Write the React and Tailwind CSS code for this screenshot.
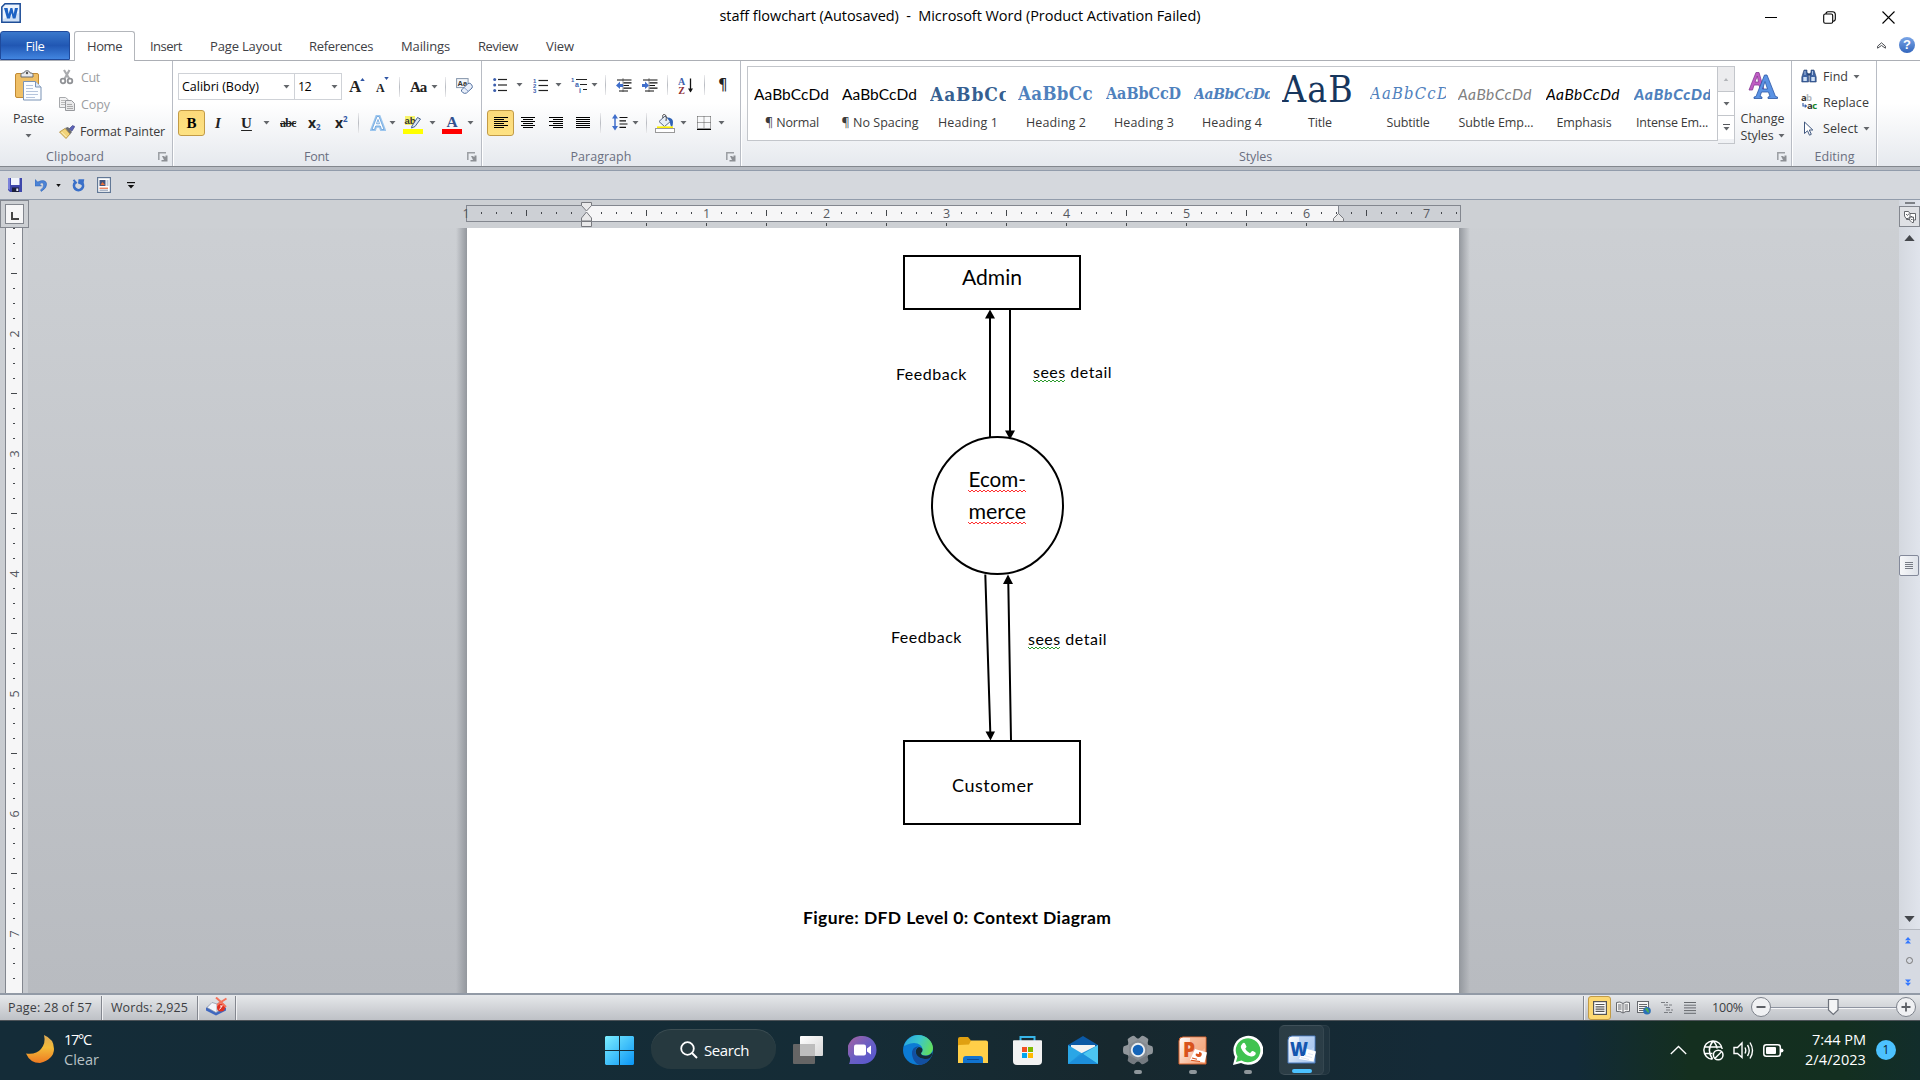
import React, { useLayoutEffect, useRef, useState } from "react";

/* Text spaced to an exact width, so labels keep their measured size. */
function Fit({ w, className = "", children }) {
  const ref = useRef(null);
  const [ls, setLs] = useState(0);
  useLayoutEffect(() => {
    const natural = ref.current.getBoundingClientRect().width;
    const n = String(children).length;
    setLs((w - natural) / n);
  }, []);
  return (
    <span ref={ref} className={"inline-block shrink-0 whitespace-pre " + className} style={{ letterSpacing: ls + "px" }}>
      {children}
    </span>
  );
}

const Caret = ({ className = "" }) => (
  <svg viewBox="0 0 7 4" className={"h-[4px] w-[7px] shrink-0 " + className}><path d="M.5 0h6L3.500 3.500z" fill="#63666b" /></svg>
);
const VSep = ({ className = "" }) => (
  <div className={"h-5 w-px shrink-0 bg-linear-to-b from-[#ececee] via-[#b9bcc2] to-[#ececee] " + className} />
);
const Launcher = ({ className = "" }) => (
  <svg viewBox="0 0 10 10" className={"h-[10px] w-[10px] shrink-0 " + className}>
    <path d="M.8 8V.8H8" fill="none" stroke="#9a9da2" strokeWidth="1.500" />
    <path d="M4 4h1.500l2 1V3.500H9.500V9.500H3.500V8H6z" fill="#8c8f94" />
  </svg>
);

function Group({ label, labelW, labelCls, launcher, className, children }) {
  return (
    <div className={"flex shrink-0 flex-col border-r border-[#b8bcc4] " + className}>
      <div className="h-[84px] shrink-0">{children}</div>
      <div className="relative flex h-[21px] items-start pt-[2px]">
        <div className={"flex justify-center " + labelCls}>
          <Fit w={labelW} className="text-[12.500px] leading-[20px] text-[#6a6f80]">{label}</Fit>
        </div>
        {launcher && <Launcher className="absolute top-[7px] right-[4px]" />}
      </div>
    </div>
  );
}

/* ---------- icons ---------- */
const WordMini = () => (
  <svg viewBox="0 0 20 20" className="h-5 w-5">
    <path d="M4 .8H19.200V19.200H.8V4z" fill="#cfe0f6" stroke="#1f4e98" strokeWidth="1.500" />
    <path d="M2 4.500l2.500-2.500H18v8L2 16z" fill="#f4f9ff" opacity=".8" />
    <path d="M3 5h3.600l1 6 1.800-6h2l1.300 6 1.200-6H17l-2.500 10.500h-2.700L10.500 10l-1.600 5.500H6z" fill="#1d62c4" />
  </svg>
);
const Paste = () => (
  <svg viewBox="0 0 27 31" className="h-[31px] w-[27px]">
    <rect x=".5" y="3.500" width="23" height="24" rx="1.500" fill="#efbf66" stroke="#c18a35" />
    <path d="M6 7V4.500C6 3 8 3 9 3c0-3 6-3 6 0 1 0 3 0 3 1.500V7z" fill="#e8eaed" stroke="#676c74" />
    <circle cx="12" cy="3" r="1.200" fill="#555" />
    <path d="M8.500 11.500h12l5.500 5.500v13H8.500z" fill="#fbfdff" stroke="#7b93b5" />
    <path d="M20.500 11.500V17H26" fill="#dde7f5" stroke="#7b93b5" />
    <path d="M11 15.500h7M11 18.500h7M11 21.500h12M11 24.500h12M11 27.500h9" stroke="#b5c4dc" />
  </svg>
);
const Cut = () => (
  <svg viewBox="0 0 16 16" className="h-4 w-4">
    <path d="M5 1l5.500 9M10.500 1L5.500 10" stroke="#a9abae" strokeWidth="2.200" />
    <circle cx="4" cy="12" r="2.300" fill="none" stroke="#909296" strokeWidth="1.800" />
    <circle cx="11" cy="12" r="2.300" fill="none" stroke="#909296" strokeWidth="1.800" />
  </svg>
);
const Copy = () => (
  <svg viewBox="0 0 16 14" className="h-[14px] w-4">
    <path d="M.5.5h6L9.500 3v7.500h-9z" fill="#f1f1f2" stroke="#a7a9ac" />
    <path d="M2 3.500h4M2 5.500h5M2 7.500h5" stroke="#bbb" />
    <path d="M6.500 3.500h6l3 3v7h-9z" fill="#e9e9ea" stroke="#97999d" />
    <path d="M8 7.500h5M8 9.500h6M8 11.500h6" stroke="#aaa" />
  </svg>
);
const Painter = () => (
  <svg viewBox="0 0 16 14" className="h-[14px] w-4">
    <path d="M10 4l3.500-3.500 2.300 1L13 6z" fill="#5b62b8" stroke="#3a3e7c" strokeWidth=".6" />
    <path d="M6 3l3-1 4 5-2 2.500z" fill="#6b6d72" />
    <path d="M6 3.500l5 5.500-4 4.500L.5 7z" fill="#f1d37a" stroke="#b08a33" strokeWidth=".8" />
    <path d="M2.500 7l5 5" stroke="#fff3c4" />
  </svg>
);
const Eraser = () => (
  <svg viewBox="0 0 17 17" className="h-[17px] w-[17px]">
    <rect x=".6" y=".6" width="11.500" height="9" fill="#f4f7fb" stroke="#8595ab" />
    <text x="1.500" y="8" fontSize="7.500" fontFamily="Liberation Sans" fontWeight="700" fill="#333">Aa</text>
    <path d="M5.500 12L12 5.500q2-1 3.500 1t.5 3.500L10.500 15q-2 1-3.800-.5T5.500 12z" fill="#e9effa" stroke="#54719f" />
    <path d="M8 9.500l4.500 4" stroke="#8ba3cc" />
  </svg>
);
const Lines = ({ kind }) => {
  const w = [14, 10, 14, 10, 14, 10];
  return (
    <svg viewBox="0 0 14 12" className="h-3 w-[14px]" shapeRendering="crispEdges">
      {w.map((n, i) => {
        const len = kind === "j" ? 14 : n;
        const x = kind === "c" ? (14 - len) / 2 : kind === "r" ? 14 - len : 0;
        return <rect key={i} x={x} y={i * 2} width={len} height="1" fill="#000" />;
      })}
    </svg>
  );
};
const Bullets = () => (
  <svg viewBox="0 0 14 14" className="h-[14px] w-[14px]">
    {[1.5, 7, 12.5].map((y) => <g key={y}><circle cx="1.700" cy={y} r="1.500" fill="#3c5fae" /><path d={`M5 ${y}h9`} stroke="#222" strokeWidth="1.200" /></g>)}
  </svg>
);
const Numbering = () => (
  <svg viewBox="0 0 15 15" className="h-[15px] w-[15px]">
    {["1", "2", "3"].map((t, i) => <g key={t}><text x="0" y={5 + i * 5} fontSize="6" fontWeight="700" fontFamily="Liberation Sans" fill="#3c5fae">{t}</text><path d={`M5.500 ${2.5 + i * 5}h9.500`} stroke="#222" strokeWidth="1.200" /></g>)}
  </svg>
);
const Multi = () => (
  <svg viewBox="0 0 17 16" className="h-4 w-[17px]">
    <text x="0" y="5" fontSize="6" fontWeight="700" fontFamily="Liberation Sans" fill="#3c5fae">1</text>
    <text x="4" y="10" fontSize="7" fontWeight="700" fontFamily="Liberation Sans" fill="#3c5fae">a</text>
    <text x="8" y="15.500" fontSize="7" fontWeight="700" fontFamily="Liberation Sans" fill="#3c5fae">i</text>
    <path d="M5 2.500h11M9 7.500h7M12 12.500h4" stroke="#222" strokeWidth="1.200" />
  </svg>
);
const Dent = ({ inward }) => (
  <svg viewBox="0 0 16 15" className="h-[15px] w-4">
    <path d="M7 .500v14" stroke="#333" strokeDasharray="1 1" />
    <path d="M1 2h14.500M7.500 4.800H15.500M7.500 7.500h5.500M7.500 10.200H15.500M3 13h9" stroke="#111" strokeWidth="1.200" />
    <path d={inward ? "M0 6h3V3.500L7 7.500 3 11V9H0z" : "M7 6H4V3.500L0 7.500 4 11V9h3z"} fill="#3f6ecb" />
  </svg>
);
const Sort = () => (
  <svg viewBox="0 0 16 17" className="h-[17px] w-4">
    <text x="0" y="8" fontSize="10" fontWeight="700" fontFamily="Liberation Serif" fill="#3c5fae">A</text>
    <text x="0.300" y="16.500" fontSize="10" fontWeight="700" fontFamily="Liberation Serif" fill="#8e2f35">Z</text>
    <path d="M12.500 1.500v13" stroke="#111" strokeWidth="1.300" /><path d="M10 11.500h5L12.500 15.500z" fill="#111" />
  </svg>
);
const Spacing = () => (
  <svg viewBox="0 0 16 17" className="h-[17px] w-4">
    <path d="M3 3v11" stroke="#3f6ecb" strokeWidth="1.500" /><path d="M0 4.500L3 0l3 4.500zM0 12l3 4.500L6 12z" fill="#3f6ecb" />
    <path d="M7.500 3.500H15.500M7.500 6.800H14M7.500 10H15.500M7.500 13.300H14" stroke="#111" strokeWidth="1.200" />
  </svg>
);
const Bucket = () => (
  <svg viewBox="0 0 20 19" className="h-[19px] w-5">
    <path d="M4 7.500L10 2l6 5-6.500 5.500z" fill="#e6edf7" stroke="#5b6b85" />
    <path d="M8 4q-1-4 1.500-3.500T11 7" fill="none" stroke="#444" />
    <path d="M12 3.500q6 0 6 4.500 0 3-1 5-2-1-2-5z" fill="#2f62b5" />
    <path d="M2 13.300h16" stroke="#fff200" strokeWidth="1.800" />
    <rect x=".5" y="14.500" width="19" height="4" fill="#fff" stroke="#999" />
  </svg>
);
const Borders = () => (
  <svg viewBox="0 0 14 14" className="h-[14px] w-[14px]">
    <path d="M.5.500V12M13.500.500V12M7 .500V12M.5.500h13M.5 6.500h13" stroke="#555" strokeDasharray="1 1" fill="none" />
    <path d="M0 13.300h14" stroke="#000" strokeWidth="1.400" />
  </svg>
);
const GlowA = () => (
  <svg viewBox="0 0 16 16" className="h-4 w-4">
    <path d="M2 14.500L7 1.500h2l5 13h-2.500l-1.200-3.500H5.700l-1.200 3.500z" fill="#fff" stroke="#9cc6ee" strokeWidth="3.400" />
    <path d="M2 14.500L7 1.500h2l5 13h-2.500l-1.200-3.500H5.700l-1.200 3.500zM6.500 8.800h3L8 4.500z" fill="#fff" stroke="#6ea5dc" strokeWidth=".9" />
  </svg>
);
const Highlight = () => (
  <svg viewBox="0 0 20 19" className="h-[19px] w-5">
    <rect x="2" y="1" width="10" height="9" fill="#f7f36a" />
    <text x="1.500" y="9" fontSize="9.500" fontFamily="Liberation Sans" fontWeight="700" fill="#333">ab</text>
    <path d="M9 11l5.500-8.500 3 1.500-5.500 7.500-3.500 1.500z" fill="#dce6f6" stroke="#46618f" />
    <rect x="0" y="14" width="20" height="5" fill="#ffff00" />
  </svg>
);
const FontColor = () => (
  <svg viewBox="0 0 20 19" className="h-[19px] w-5">
    <text x="4.500" y="12" fontSize="15.500" fontFamily="Liberation Serif" fontWeight="700" fill="#33508f">A</text>
    <rect x="0" y="14" width="20" height="5" fill="#ff0000" />
  </svg>
);
const ChangeStyles = () => (
  <svg viewBox="0 0 30 29" className="h-[29px] w-[30px]">
    <path d="M1 19L8 1.500h3l5 17.500h-3.500L11 14H6l-1.500 5zM7 11h3.500L9.300 5z" fill="#c05cc4" stroke="#873a94" strokeWidth=".8" />
    <path d="M6 27.500v-1.500l2-.5L16.500 4h2.500l8.500 21.500 2 .500v1.500H20V26l2-.5-1.500-4.500h-7L12 25.500l2 .500v1.500zM14.500 18h5L17 10.500z" fill="#5b93e4" stroke="#2b57a6" strokeWidth=".8" />
  </svg>
);
const Binoculars = () => (
  <svg viewBox="0 0 16 14" className="h-[14px] w-4">
    <path d="M3 1h3v3h1l.5 4V13H.8V8zM10 1h3l2.200 7v5H8.800V8L9 4h1z" fill="#3f64a3" stroke="#25406f" strokeWidth=".6" />
    <path d="M2.300 8h3.500v4H2.300zM10.300 8h3.500v4h-3.500z" fill="#cfe0f5" /><path d="M6.500 5.500h3" stroke="#25406f" strokeWidth="2" />
    <path d="M4 2v4M11.500 2v4" stroke="#b6cbea" strokeWidth=".9" />
  </svg>
);
const ReplaceI = () => (
  <svg viewBox="0 0 17 16" className="h-4 w-[17px]" fontFamily="Open Sans" fontWeight="700" fontSize="9.500">
    <text x="0" y="7" fill="#333">a</text><text x="5" y="7" fill="#b7b9bc">b</text>
    <text x="6" y="15" fill="#333">a</text><text x="11.200" y="15" fill="#17862f">c</text>
    <path d="M2 9v3h2.500" stroke="#3b61a8" fill="none" strokeWidth="1.200" /><path d="M3.800 10l2.500 2-2.500 2z" fill="#3b61a8" />
  </svg>
);
const Cursor = () => (
  <svg viewBox="0 0 11 15" className="h-[15px] w-[11px]"><path d="M1.500 1v11.500l3-2.700 2 4.400 1.800-.9-2-4.300h3.500z" fill="#fff" stroke="#41587f" /></svg>
);

/* ---------- title + tabs ---------- */
function TitleBar() {
  return (
    <div className="grid h-[31px] grid-cols-3 bg-white">
      <div className="pt-[3px] pl-px"><WordMini /></div>
      <div className="flex justify-center pt-[5px]">
        <Fit w={481} className="text-[14.500px] leading-[22px] text-black">{"staff flowchart (Autosaved)  -  Microsoft Word (Product Activation Failed)"}</Fit>
      </div>
      <div className="flex items-start justify-end gap-[46px] pt-[11px] pr-[25px]">
        <svg viewBox="0 0 13 14" className="h-[14px] w-[13px]"><path d="M1 6.500h12" stroke="#000" /></svg>
        <svg viewBox="0 0 13 13" className="h-[13px] w-[13px]" fill="none" stroke="#000" strokeWidth="1.100"><rect x=".7" y="3" width="9" height="9.300" rx="1.500" /><path d="M3 3q0-2.300 2-2.300h4.500q2.800 0 2.800 2.800V8q0 2-2.300 2.200" /></svg>
        <svg viewBox="0 0 13 13" className="h-[13px] w-[13px]"><path d="M.5.500l12 12M12.500.500l-12 12" stroke="#000" strokeWidth="1.100" /></svg>
      </div>
    </div>
  );
}
function Tabs() {
  const tabs = [["Insert", 32, "ml-[15px]"], ["Page Layout", 72, "ml-[28px]"], ["References", 64, "ml-[27px]"], ["Mailings", 49, "ml-[28px]"], ["Review", 40, "ml-[28px]"], ["View", 28, "ml-[28px]"]];
  return (
    <div className="flex h-[30px] border-b border-[#acafb5] bg-white">
      <div className="flex h-[29px] w-[70px] justify-center rounded-t-[3px] border border-[#1f4a9c] bg-linear-to-b from-[#3a78cc] via-[#2157b3] to-[#4285e0] pt-[4px]">
        <Fit w={19} className="text-[13px] leading-5 text-white">File</Fit>
      </div>
      <div className="ml-[4px] flex h-[30px] w-[61px] shrink-0 justify-center rounded-t-[3px] border border-b-0 border-[#b3b6bb] bg-white pt-[4px]">
        <Fit w={35} className="text-[13px] leading-5 text-[#3e4045]">Home</Fit>
      </div>
      {tabs.map(([t, w, m]) => (
        <div key={t} className={"flex items-start pt-[5px] " + m}><Fit w={w} className="text-[13px] leading-5 text-[#3e4045]">{t}</Fit></div>
      ))}
      <div className="ml-auto flex items-start gap-[13px] pt-[6px] pr-[5px]">
        <svg viewBox="0 0 9 7" className="mt-[5px] h-[7px] w-[9px]"><path d="M.6 4.200L4.500.8l3.900 3.400v2L4.500 3.500.6 6.200z" fill="#fff" stroke="#4b4d52" /></svg>
        <div className="flex h-4 w-4 items-center justify-center rounded-full bg-linear-to-b from-[#7aa5e6] to-[#3366bd] font-['Liberation_Sans'] text-[13px] leading-4 font-bold text-white">?</div>
      </div>
    </div>
  );
}

/* ---------- ribbon ---------- */
const rt = "text-[12.500px] leading-5 ";
function Ribbon() {
  const styles = [
    ["¶ Normal", 54, "AaBbCcDd", "font-['Lato'] text-[15.500px] text-black", 75],
    ["¶ No Spacing", 77, "AaBbCcDd", "font-['Lato'] text-[15.500px] text-black", 75],
    ["Heading 1", 60, "AaBbCc", "font-['DejaVu_Serif_Condensed','DejaVu_Serif'] font-bold text-[19px] text-[#365f91]", 80],
    ["Heading 2", 60, "AaBbCc", "font-['DejaVu_Serif_Condensed','DejaVu_Serif'] font-bold text-[18.500px] text-[#4f81bd]", 75],
    ["Heading 3", 60, "AaBbCcD", "font-['DejaVu_Serif_Condensed','DejaVu_Serif'] font-bold text-[16px] text-[#4f81bd]", 75],
    ["Heading 4", 60, "AaBbCcDd", "font-['DejaVu_Serif_Condensed','DejaVu_Serif'] font-bold italic text-[15.500px] text-[#4f81bd]", 80],
    ["Title", 24, "AaB", "font-['DejaVu_Serif_Condensed','DejaVu_Serif'] -mt-[8px] text-[37px] text-[#17365d]", 72],
    ["Subtitle", 43, "AaBbCcD", "font-['DejaVu_Serif_Condensed','DejaVu_Serif'] italic text-[16.500px] text-[#4f81bd]", 80],
    ["Subtle Emp...", 75, "AaBbCcDd", "font-['Lato'] italic text-[15.500px] text-[#808080]", 74],
    ["Emphasis", 55, "AaBbCcDd", "font-['Lato'] italic text-[15.500px] text-black", 74],
    ["Intense Em...", 72, "AaBbCcDd", "font-['Lato'] font-black italic text-[15.500px] text-[#4f81bd]", 78],
  ];
  return (
    <div className="flex h-[105px] bg-linear-to-b from-white from-40% to-[#e6e9ee]">
      <Group label="Clipboard" labelW={58} labelCls="w-[150px]" launcher className="w-[173px]">
        <div className="flex">
          <div className="flex w-[57px] flex-col items-center pt-[9px]">
            <Paste />
            <Fit w={31} className={rt + "mt-[8px] text-[#3b3b3b]"}>Paste</Fit>
            <Caret className="mt-[5px]" />
          </div>
          <div className="flex flex-col pt-[8px] pl-[2px]">
            <div className="flex h-[27px] items-start gap-[6px]"><Cut /><Fit w={19} className={rt + "-mt-px text-[#9b9da1]"}>Cut</Fit></div>
            <div className="flex h-[27px] items-start gap-[6px]"><div className="pt-px"><Copy /></div><Fit w={29} className={rt + "-mt-px text-[#9b9da1]"}>Copy</Fit></div>
            <div className="flex h-[22px] items-start gap-[5px]"><div className="pt-[2px]"><Painter /></div><Fit w={85} className={rt + "-mt-px text-[#3b3b3b]"}>Format Painter</Fit></div>
          </div>
        </div>
      </Group>

      <Group label="Font" labelW={25} labelCls="w-[285px]" launcher className="w-[309px] border-l border-l-white">
        <div className="flex h-[39px] items-center pt-[12px] pl-[4px]">
          <div className="flex h-[27px] w-[117px] shrink-0 items-center justify-between border border-[#cfd2d7] bg-white pr-[4px] pl-[3px]"><Fit w={77} className={rt + "text-black"}>Calibri (Body)</Fit><Caret /></div>
          <div className="-ml-px flex h-[27px] w-[48px] shrink-0 items-center justify-between border border-[#cfd2d7] bg-white pr-[3px] pl-[3px]"><Fit w={13} className={rt + "text-black"}>12</Fit><Caret /></div>
          <div className="ml-[7px] flex w-[15px] font-['Liberation_Serif'] text-[17px] leading-5 font-bold text-[#222]">A<svg viewBox="0 0 6 4" className="mt-px -ml-px h-[3px] w-[5px] shrink-0"><path d="M0 4h6L3 0z" fill="#2f55a4" /></svg></div>
          <div className="ml-[12px] flex w-[13px] font-['Liberation_Serif'] text-[12px] leading-5 font-bold text-[#222]"><span className="pt-[2px]">A</span><svg viewBox="0 0 6 4" className="mt-px -ml-px h-[3px] w-[5px] shrink-0"><path d="M0 0h6L3 4z" fill="#2f55a4" /></svg></div>
          <VSep className="ml-[10px]" />
          <Fit w={16} className="ml-[10px] font-['Liberation_Serif'] text-[15px] leading-5 font-bold text-[#222]">Aa</Fit>
          <Caret className="ml-[5px]" />
          <VSep className="ml-[7px]" />
          <div className="ml-[10px]"><Eraser /></div>
        </div>
        <div className="mt-[9px] flex h-[27px] items-center pl-[4px] font-['Liberation_Serif'] text-[15px] leading-5 font-bold text-[#222]">
          <div className="flex h-[26px] w-[27px] items-center justify-center rounded-[3px] border border-[#c29b46] bg-linear-to-b from-[#fcd97a] to-[#fde283] text-black">B</div>
          <div className="w-[26px] text-center italic">I</div>
          <div className="w-[31px] text-center underline underline-offset-2">U</div>
          <Caret className="ml-px" />
          <Fit w={16} className="ml-[10px] text-[12px] leading-5 line-through">abc</Fit>
          <div className="ml-[12px] flex h-5 w-[14px] font-['Open_Sans'] text-[14px]">x<span className="pt-[4px] text-[8px] text-[#2f55a4]">2</span></div>
          <div className="ml-[13px] flex h-5 w-[14px] font-['Open_Sans'] text-[14px]">x<span className="-mt-[4px] text-[8px] text-[#2f55a4]">2</span></div>
          <VSep className="ml-[9px]" />
          <div className="ml-[11px]"><GlowA /></div><Caret className="ml-[3px]" />
          <div className="ml-[7px] pt-[4px]"><Highlight /></div><Caret className="ml-[6px]" />
          <div className="ml-[6px] pt-[4px]"><FontColor /></div><Caret className="ml-[5px]" />
        </div>
      </Group>

      <Group label="Paragraph" labelW={61} labelCls="w-[236px]" launcher className="w-[259px] border-l border-l-white">
        <div className="flex h-[39px] items-center pt-[9px] pl-[10px]">
          <Bullets /><Caret className="ml-[9px]" />
          <div className="ml-[10px]"><Numbering /></div><Caret className="ml-[7px]" />
          <div className="ml-[9px]"><Multi /></div><Caret className="ml-[3px]" />
          <VSep className="ml-[7px]" />
          <div className="ml-[10px]"><Dent /></div><div className="ml-[10px]"><Dent inward /></div>
          <VSep className="ml-[9px]" />
          <div className="ml-[10px]"><Sort /></div>
          <VSep className="ml-[10px]" />
          <div className="ml-[13px] font-['DejaVu_Sans'] text-[15px] leading-5 text-[#222]">¶</div>
        </div>
        <div className="mt-[9px] flex h-[27px] items-center pl-[4px]">
          <div className="flex h-[26px] w-[27px] items-center justify-center rounded-[3px] border border-[#c29b46] bg-linear-to-b from-[#fcd97a] to-[#fde283]"><Lines kind="l" /></div>
          <div className="ml-[7px]"><Lines kind="c" /></div><div className="ml-[14px]"><Lines kind="r" /></div><div className="ml-[13px]"><Lines kind="j" /></div>
          <VSep className="ml-[10px]" />
          <div className="ml-[11px]"><Spacing /></div><Caret className="ml-[4px]" />
          <VSep className="ml-[7px]" />
          <div className="ml-[8px] pt-[2px]"><Bucket /></div><Caret className="ml-[5px]" />
          <div className="ml-[10px]"><Borders /></div><Caret className="ml-[7px]" />
        </div>
      </Group>

      <Group label="Styles" labelW={33} labelCls="w-[1027px]" launcher className="w-[1051px] border-l border-l-white">
        <div className="flex pt-[5px] pl-[5px]">
          <div className="flex h-[75px] w-[971px] shrink-0 overflow-hidden border border-[#c3c6cb] bg-white">
            {styles.map(([n, w, p, c, pw]) => (
              <div key={n} className="flex w-[88px] shrink-0 flex-col items-center">
                <div className="mt-[8px] flex h-[38px] w-[76px] items-center overflow-hidden"><Fit w={pw} className={"leading-[36px] " + c}>{p}</Fit></div>
                <Fit w={w} className={rt + "text-[#3b3b3b]"}>{n}</Fit>
              </div>
            ))}
          </div>
          <div className="flex w-[17px] shrink-0 flex-col border border-l-0 border-[#c3c6cb]">
            <div className="flex h-[24px] items-center justify-center bg-[#ececee]"><svg viewBox="0 0 6 4" className="h-[3px] w-[6px]"><path d="M0 4h6L3 0z" fill="#b2b4b8" /></svg></div>
            <div className="flex h-[24px] items-center justify-center border-t border-[#c3c6cb] bg-white"><Caret /></div>
            <div className="flex h-[24px] flex-col items-center justify-center gap-[2px] border-t border-[#c3c6cb] bg-white"><div className="h-px w-[7px] bg-[#55585d]" /><Caret /></div>
          </div>
          <div className="flex w-[55px] shrink-0 flex-col items-center pt-[5px]">
            <ChangeStyles />
            <Fit w={44} className="mt-[10px] text-[12.500px] leading-[17px] text-[#3b3b3b]">Change</Fit>
            <div className="flex items-center gap-[4px]"><Fit w={33} className="text-[12.500px] leading-[17px] text-[#3b3b3b]">Styles</Fit><Caret /></div>
          </div>
        </div>
      </Group>

      <Group label="Editing" labelW={40} labelCls="w-[84px]" className="w-[85px] border-l border-l-white">
        <div className="flex flex-col pt-[7px] pl-[8px]">
          <div className="flex h-[26px] items-start"><div className="w-[22px] pt-px"><Binoculars /></div><Fit w={25} className={rt + "text-[#3b3b3b] -mt-px"}>Find</Fit><Caret className="mt-[7px] ml-[5px]" /></div>
          <div className="flex h-[26px] items-start"><div className="w-[22px]"><ReplaceI /></div><Fit w={46} className={rt + "text-[#3b3b3b] -mt-px"}>Replace</Fit></div>
          <div className="flex h-[24px] items-start"><div className="w-[22px] pt-px pl-[2px]"><Cursor /></div><Fit w={35} className={rt + "text-[#3b3b3b] -mt-px"}>Select</Fit><Caret className="mt-[7px] ml-[5px]" /></div>
        </div>
      </Group>
      <div className="flex-1 border-l border-white" />
    </div>
  );
}

function QuickAccess() {
  return (
    <div className="h-[34px]">
      <div className="h-[4px] border-t border-[#83878d] bg-[#b7bbc2]" />
      <div className="flex h-[30px] items-center border-y border-t-[#929cab] border-b-[#929cab] bg-[#d5d8dd] pl-[8px]">
        <svg viewBox="0 0 14 14" className="h-[14px] w-[14px]"><path d="M0 0h14v14H2L0 12z" fill="#3e47ab" /><path d="M3 0h8.500v7H3z" fill="#f2f5fd" /><path d="M0 0h2v12l-2-1z" fill="#7b82da" /><path d="M4 9.500h7V14H4z" fill="#1c1f3c" /><path d="M8.300 10.500h2V13h-2z" fill="#e8ebf8" /></svg>
        <svg viewBox="0 0 12 14" className="ml-[13px] h-[14px] w-3"><path d="M0 1.500V8h6.500L4.600 6Q8 3.500 8.500 6.500T5.500 12l.8 1.500Q12 10 11.700 5.500 10 .5 2.800 4z" fill="#4b83d6" stroke="#2c61b5" strokeWidth=".5" /></svg>
        <svg viewBox="0 0 6 4" className="ml-[9px] h-[3px] w-[5px]"><path d="M0 0h6L3 4z" fill="#111" /></svg>
        <svg viewBox="0 0 13 13" className="ml-[11px] h-[13px] w-[13px]"><path d="M3.300 3.500A4.500 4.500 0 1 0 10 3.800" fill="none" stroke="#3a70c9" strokeWidth="2.700" /><path d="M6.500.3h5.800L11 6.500 6 4.500z" fill="#3a70c9" /><path d="M1.500.8l3.200 3.500" stroke="#3a70c9" strokeWidth="2" /></svg>
        <svg viewBox="0 0 14 16" className="ml-[12px] h-4 w-[14px]"><rect x=".6" y=".6" width="12.800" height="14.800" fill="#fff" stroke="#627896" strokeWidth="1.200" /><rect x="2.500" y="3" width="6" height="6" fill="#44557c" /><path d="M3.500 8l2-3 2.500 3z" fill="#ef7036" /><path d="M9.500 4h2M9.500 6h2M9.500 8h2M2.500 13.200h8.500" stroke="#8594ae" /><path d="M2.500 11.200h8.500" stroke="#e2531f" /></svg>
        <svg viewBox="0 0 8 7" className="ml-[16px] h-[7px] w-2"><path d="M0 .6h8" stroke="#111" strokeWidth="1.200" /><path d="M.8 3h6.400L4 6.600z" fill="#111" /></svg>
      </div>
    </div>
  );
}

/* ---------- rulers ---------- */
function HRuler() {
  const ticks = [];
  for (let i = -7; i <= 58; i++) {
    const x = 120.5 + i * 15;
    if (i === 0) continue;
    if (i % 8 === 0) ticks.push(<text key={i} x={x} y="17.500" textAnchor="middle" fontSize="12.500" fill="#55585f">{i / 8}</text>);
    else if (i % 4 === 0) ticks.push(<path key={i} d={`M${x} 10v6`} stroke="#44474c" />);
    else ticks.push(<path key={i} d={`M${x} 12v2`} stroke="#44474c" />);
  }
  const stops = [];
  for (let x = 180.5; x < 850; x += 60) stops.push(<path key={x} d={`M${x} 23v3`} stroke="#44474c" />);
  return (
    <svg viewBox="0 0 1000 28" className="h-[28px] w-[1000px] overflow-visible font-['Open_Sans']">
      <rect x=".5" y="5.500" width="994" height="16" fill="#cdd0d5" stroke="#83878f" />
      <rect x="120" y="6" width="752" height="15" fill="#f6f6f7" />
      <path d="M872.500 6v10" stroke="#83878f" />
      <text x="0" y="17.500" textAnchor="middle" fontSize="12.500" fill="#55585f">1</text>
      {ticks}{stops}
      <path d="M115.500 2.500h10v3l-5 5.500-5-5.500zM120.500 12l5 6v3h-10v-3zM115.500 21.500h10v5h-10z" fill="#e9e9ea" stroke="#77797e" />
      <path d="M872.500 13.500l5 5v3h-10v-3z" fill="#e9e9ea" stroke="#77797e" />
    </svg>
  );
}
function VRuler() {
  const items = [];
  for (let i = -7; i < 44; i++) {
    const y = 105.5 + i * 15;
    if (i % 8 === 0) items.push(<text key={i} transform={`translate(14 ${y + 0.5}) rotate(-90)`} textAnchor="middle" fontSize="12.500" fill="#55585f">{i / 8 + 2}</text>);
    else if (i % 4 === 0) items.push(<path key={i} d={`M6 ${y}h6`} stroke="#44474c" />);
    else items.push(<path key={i} d={`M8 ${y}h2`} stroke="#44474c" />);
  }
  return (
    <div className="w-[28px] shrink-0 bg-[#cfd2d7]/60 pl-[5px]">
      <svg viewBox="0 0 18 765" className="h-[765px] w-[18px] font-['Open_Sans']">
        <rect width="18" height="765" fill="#f6f6f7" /><path d="M.5 0v765M17.500 0v765" stroke="#83878f" />{items}
      </svg>
    </div>
  );
}

/* ---------- page ---------- */
function wave(x, y, w) {
  let d = `M${x} ${y}`;
  for (let i = 0; i < w / 2; i++) d += `l2 ${i % 2 ? -2 : 2}`;
  return d;
}
function Diagram() {
  return (
    <svg viewBox="467 228 992 765" className="block h-[765px] w-[992px]">
      <g fill="none" stroke="#000" strokeWidth="2">
        <rect x="904" y="256" width="176" height="53" />
        <rect x="904" y="741" width="176" height="83" />
        <ellipse cx="997.500" cy="505.500" rx="65.500" ry="68.500" />
        <path d="M990 437V316M1010 310v122" />
        <path d="M985.300 574.500L990.300 733M1011 740L1008.300 583" />
      </g>
      <path d="M990 309.500l5 9h-10zM1010 439.500l-5-9h10zM990.500 740.500l-5-9h9.500zM1008 574.500l5 9.500h-10z" stroke="none" />
      <g fontFamily="Lato, sans-serif">
        <text x="962" y="285" fontSize="21.500" textLength="60" lengthAdjust="spacingAndGlyphs">Admin</text>
        <text x="896" y="380" fontSize="16" textLength="70.500">Feedback</text>
        <text x="1033" y="378" fontSize="16" textLength="78.500">sees detail</text>
        <text x="968.500" y="486.500" fontSize="21.500" textLength="57.500" lengthAdjust="spacingAndGlyphs">Ecom-</text>
        <text x="968.500" y="518.500" fontSize="21.500" textLength="57.500" lengthAdjust="spacingAndGlyphs">merce</text>
        <text x="891" y="643" fontSize="16" textLength="70.500">Feedback</text>
        <text x="1028" y="645" fontSize="16" textLength="78.500">sees detail</text>
        <text x="952" y="792" fontSize="18" textLength="81">Customer</text>
        <text x="803" y="923.500" fontSize="17.500" fontWeight="700" textLength="308">Figure: DFD Level 0: Context Diagram</text>
      </g>
      <g fill="none" strokeWidth="1">
        <path d={wave(1033, 380, 32)} stroke="#2d9b2d" /><path d={wave(1028, 647, 32)} stroke="#2d9b2d" />
        <path d={wave(968, 490, 58)} stroke="#ff3030" /><path d={wave(968, 522, 58)} stroke="#ff3030" />
      </g>
    </svg>
  );
}
function Scroller() {
  return (
    <div className="flex w-[21px] shrink-0 flex-col items-center bg-linear-to-r from-[#d4d8df] to-[#e0e4ec]">
      <div className="mt-[2px] h-[2px] w-[10px] bg-[#7d8187]" />
      <div className="mt-[2px] flex h-[21px] w-[21px] items-center justify-center border border-[#83878f] bg-[#dfe1e5]">
        <svg viewBox="0 0 12 12" className="h-3 w-3" fill="#fff" stroke="#55585d" strokeWidth=".9"><path d="M5.500 2.500h6v6.500h-4M2.500 7V8.500h3" /><path d="M.5.500h4l1.500 2V6l-2 1.500H2L.5 5z" /><path d="M6 6h3.500V11.500H8L5.500 9z" /><path d="M2 3l1.500 1.500L5 2.500M7 5l1.500 1.500M7 8.500h1.500" /></svg>
      </div>
      <svg viewBox="0 0 12 7" className="mt-[8px] h-[6px] w-[11px]"><path d="M0 7h12L6 0z" fill="#44474c" /></svg>
      <div className="mt-[314px] mr-px flex h-[21px] w-[20px] flex-col items-center justify-center gap-px rounded-[2px] border border-[#83899a] bg-linear-to-r from-[#f6f7f9] to-[#dfe3ea]">
        <div className="h-px w-2 bg-[#777c85]" /><div className="h-px w-2 bg-[#777c85]" /><div className="h-px w-2 bg-[#777c85]" /><div className="h-px w-2 bg-[#777c85]" />
      </div>
      <svg viewBox="0 0 12 7" className="mt-[340px] h-[6px] w-[11px]"><path d="M0 0h12L6 7z" fill="#44474c" /></svg>
      <div className="mt-[7px] flex w-full flex-1 flex-col items-center border-t border-[#b4b8c0] bg-[#d6dae2] pr-[3px]">
        <svg viewBox="0 0 6 7" className="mt-[7px] h-[7px] w-[6px]"><path d="M0 3.200L3 0l3 3.200zM0 6.500L3 3.300l3 3.200z" fill="#3478ff" /></svg>
        <div className="mt-[13px] ml-[2px] h-[7px] w-[7px] rounded-full border-[1.500px] border-[#777]" />
        <svg viewBox="0 0 6 7" className="mt-[15px] h-[7px] w-[6px]"><path d="M0 .5h6L3 3.700zM0 3.800h6L3 7z" fill="#3478ff" /></svg>
      </div>
    </div>
  );
}
function Workspace() {
  return (
    <div className="flex h-[793px] bg-linear-to-b from-[#cdd0d4] to-[#b8bbc0]">
      <div className="flex flex-1 flex-col">
        <div className="flex h-[28px] items-start bg-[#cdd0d4]">
          <div className="flex h-[28px] w-[29px] shrink-0 items-center justify-center border border-[#83878f] bg-[#cdd0d4]">
            <div className="flex h-[20px] w-[19px] items-center justify-center border border-[#83878f] bg-[#f6f6f7]"><div className="mt-[4px] h-[8px] w-2 border-b-2 border-l-2 border-[#444]" /></div>
          </div>
          <div className="ml-[437px]"><HRuler /></div>
        </div>
        <div className="flex h-[765px]">
          <VRuler />
          <div className="ml-[428px] w-[11px] bg-linear-to-r from-transparent to-[#93979d]" />
          <div className="w-[992px] bg-white"><Diagram /></div>
          <div className="w-[11px] bg-linear-to-r from-[#93979d] to-transparent" />
        </div>
      </div>
      <Scroller />
    </div>
  );
}

/* ---------- status bar ---------- */
const SSep = ({ className = "" }) => <div className={"h-6 w-[2px] border-l border-[#83878f] bg-[#f0f1f3] " + className} />;
function StatusBar() {
  return (
    <div className="flex h-[28px] items-center border-t-2 border-b border-t-[#929aa6] border-b-[#4d5358] bg-linear-to-b from-[#e6e8eb] to-[#bec1c6]">
      <Fit w={84} className="ml-[8px] text-[12.500px] leading-5 text-[#3b3d42]">Page: 28 of 57</Fit>
      <SSep className="ml-[9px]" />
      <Fit w={77} className="ml-[8px] text-[12.500px] leading-5 text-[#3b3d42]">Words: 2,925</Fit>
      <SSep className="ml-[9px]" />
      <svg viewBox="0 0 21 19" className="mb-[3px] ml-[7px] h-[19px] w-[21px]">
        <path d="M0 11l5-4 6 2 4-2 5 4v2.500L10 18.500 0 13.500z" fill="#3f68c0" />
        <path d="M1 10.500l5-5 5 1.500 4-3 4.500 6L10 15.500z" fill="#f4f6fa" stroke="#8a93a5" strokeWidth=".7" />
        <path d="M11 7.500v7" stroke="#9da5b5" /><circle cx="15" cy="10.500" r="4" fill="#e03020" /><path d="M13.500 12.500l3-4M15 8v2" stroke="#fff" />
        <path d="M10 .500l5 4.500 5.500-3.500M11 8l4-3 5 5" stroke="#f4735b" strokeWidth="2" fill="none" />
      </svg>
      <SSep className="ml-[8px]" />
      <SSep className="ml-auto" />
      <div className="ml-[3px] flex h-6 w-[23px] items-center justify-center rounded-[3px] border border-[#c29b46] bg-[#fcd873]">
        <svg viewBox="0 0 14 14" className="h-[14px] w-[14px]"><rect x=".6" y=".6" width="12.800" height="12.800" fill="#fff" stroke="#555" strokeWidth="1.200" /><path d="M2.500 3.500h9M2.500 5.800h9M2.500 8.100h9M2.500 10.400h9" stroke="#555" strokeWidth="1.200" /></svg>
      </div>
      <svg viewBox="0 0 14 13" className="ml-[5px] h-[13px] w-[14px]" fill="#f6f6f6" stroke="#66696e"><path d="M.5 1.500Q4 0 7 2.500 10 0 13.500 1.500v9Q10 9.500 7 12 4 9.500.5 10.500z" /><path d="M7 2.500V12M2 4h3.500M2 6h3.500M2 8h3.500M8.500 4H12M8.500 6H12M8.500 8H12" /></svg>
      <svg viewBox="0 0 14 14" className="ml-[7px] h-[14px] w-[14px]"><rect x=".5" y=".5" width="11" height="11" fill="#f6f6f6" stroke="#66696e" /><path d="M2 3.500h8M2 5.500h8M2 7.500h8M2 9.500h5" stroke="#66696e" /><circle cx="10" cy="9.800" r="3.800" fill="#2a6fb8" /><path d="M8 8q2-2 3 0t1 4q-2-1-4-4z" fill="#4cb050" /></svg>
      <svg viewBox="0 0 12 12" className="ml-[10px] h-3 w-3" stroke="#7a7d82"><path d="M0 .500h7M3 3h8M5 5.500h4M5 8h7M3 10.500h8" strokeDasharray="4 1" /></svg>
      <svg viewBox="0 0 12 12" className="ml-[11px] h-3 w-3" stroke="#66696e"><path d="M0 .500h12M0 3.200h12M0 5.900h12M0 8.600h12M0 11.300h12" /></svg>
      <Fit w={31} className="ml-[16px] text-[12.500px] leading-5 text-[#3b3d42]">100%</Fit>
      <svg viewBox="0 0 170 22" className="mr-px mb-[2px] ml-[6px] h-[22px] w-[170px]">
        <path d="M20 11.500h130" stroke="#8d93a0" /><path d="M20 12.500h130" stroke="#f4f5f7" />
        <g fill="#f0f1f3" stroke="#7d828b"><circle cx="12" cy="11" r="9.500" /><circle cx="157" cy="11" r="9.500" /></g>
        <path d="M7.500 11h9M152.500 11h9M157 6.500v9" stroke="#5d6066" strokeWidth="1.800" />
        <path d="M79.500 3.500h9.500v10.500l-4.700 4.500-4.800-4.500z" fill="#f4f5f6" stroke="#6d727b" strokeWidth="1.200" />
      </svg>
    </div>
  );
}

/* ---------- taskbar ---------- */
function Office({ letter, c1, c2, bg }) {
  return (
    <svg viewBox="0 0 29 29" className="h-[29px] w-[29px]">
      <defs>
        <linearGradient id={"o" + letter} x1="0" y1="0" x2="1" y2="1"><stop offset="0" stopColor="#fff" /><stop offset="1" stopColor={bg} /></linearGradient>
      </defs>
      <path d="M5 1h23v27H1V5q0-4 4-4z" fill={"url(#o" + letter + ")"} stroke={c2} />
      <path d="M12 1.500h15.500v10q-6 6-15.500 4z" fill={bg} opacity=".55" />
      <path d="M17 13l12 3.500-2.500 10L12 24z" fill="#fff" />
      <text x={letter === "W" ? 3 : 5} y="20.500" fontSize={letter === "W" ? 19 : 21} fontFamily="Open Sans" fontWeight="800" fill={c1} textLength={letter === "W" ? 18 : 12} lengthAdjust="spacingAndGlyphs">{letter}</text>
      {letter === "P" ? <g><path d="M18 17.500a3 2.500 0 1 0 3-1.500v2z" fill={c1} /><path d="M14 22l5 1.200M13 24.200l9 1.300" stroke={c1} strokeWidth="1.100" /></g> : <path d="M21 18.500l5 1.300M17 20.500l8 2M14 22.500l8 2" stroke="#dfe8f5" />}
    </svg>
  );
}
const Dot = ({ on }) => <div className={"mt-[5px] h-1 rounded-full " + (on ? "w-5 bg-[#4cc2ff]" : "w-2 bg-[#8e969b]")} />;
function TaskItem({ running, children }) {
  return <div className="flex h-[56px] w-[55px] shrink-0 flex-col items-center pt-[14px]"><div className="flex h-[30px] items-center">{children}</div>{running && <Dot />}</div>;
}
function Taskbar() {
  return (
    <div className="flex h-[59px] bg-[linear-gradient(90deg,#142c38_0%,#152c36_45%,#17282e_58%,#142a37_75%,#122a38_82%,#142f1f_88%,#132f20_96%,#122d2b_100%)] text-white">
      <div className="flex w-[592px] pt-[9px] pl-[26px]">
        <svg viewBox="0 0 28 28" className="mt-[5px] h-[28px] w-[28px]">
          <defs><linearGradient id="moon" x1="0" y1="0" x2="0" y2="1"><stop offset="0" stopColor="#dca957" /><stop offset=".45" stopColor="#f3bb38" /><stop offset="1" stopColor="#ee7a22" /></linearGradient></defs>
          <path d="M18 0Q28 4 28 14T14 28Q4 28 0 18.500 10 20 15 14T18 0z" fill="url(#moon)" />
        </svg>
        <div className="flex flex-col pl-[10px]">
          <Fit w={30} className="text-[14.500px] leading-5">17°C</Fit>
          <Fit w={35} className="text-[14.500px] leading-5 text-[#b9c2c6]">Clear</Fit>
        </div>
      </div>
      <TaskItem>
        <svg viewBox="0 0 29 29" className="h-[29px] w-[29px]"><defs><linearGradient id="win" x1="0" y1="0" x2="1" y2="1"><stop offset="0" stopColor="#7ceeff" /><stop offset="1" stopColor="#0a95f5" /></linearGradient></defs><path d="M1 0h13v14H0V1zM15 0h13l1 1v13H15zM0 15h14v14H1l-1-1zM15 15h14v13l-1 1H15z" fill="url(#win)" /></svg>
      </TaskItem>
      <div className="mt-[8px] ml-[4px] flex h-[40px] w-[125px] shrink-0 items-center rounded-full border-t border-white/10 bg-[#26393f] pl-[29px]">
        <svg viewBox="0 0 18 18" className="h-[18px] w-[18px]"><circle cx="7.500" cy="7.500" r="6.300" fill="none" stroke="#fff" strokeWidth="1.800" /><path d="M12 12l5 5" stroke="#fff" strokeWidth="2" /></svg>
        <Fit w={45} className="ml-[6px] text-[15px] leading-5">Search</Fit>
      </div>
      <div className="flex pl-[4px]">
        <TaskItem>
          <svg viewBox="0 0 30 29" className="h-[29px] w-[30px]"><defs><linearGradient id="tv" x1="0" y1="0" x2="1" y2="1"><stop offset="0" stopColor="#fff" /><stop offset="1" stopColor="#d6d6d6" /></linearGradient></defs><rect x="0" y="8" width="22" height="20" rx="1" fill="#656565" /><rect x="7" y="0" width="23" height="20" rx="1" fill="url(#tv)" /><rect x="7" y="8" width="15" height="12" fill="#bdbdbd" /></svg>
        </TaskItem>
        <TaskItem>
          <svg viewBox="0 0 29 29" className="h-[29px] w-[29px]"><defs><linearGradient id="chat" x1="0" y1="0" x2="1" y2="1"><stop offset="0" stopColor="#a9639f" /><stop offset=".5" stopColor="#6a5fc4" /><stop offset="1" stopColor="#5556d0" /></linearGradient></defs><path d="M14.500 0a14 14 0 1 1 0 28H1q1.500-3 1-6A14 14 0 0 1 14.500 0z" fill="url(#chat)" /><rect x="6" y="8.500" width="12" height="11" rx="2" fill="#fff" /><path d="M19 12.500l4-3v9l-4-3z" fill="#fff" /></svg>
        </TaskItem>
        <TaskItem>
          <svg viewBox="0 0 30 30" className="h-[30px] w-[30px]">
            <defs><linearGradient id="e1" x1="0" y1=".2" x2="1" y2=".5"><stop offset="0" stopColor="#29a7e0" /><stop offset=".5" stopColor="#3bc6cc" /><stop offset="1" stopColor="#62de5e" /></linearGradient></defs>
            <circle cx="15" cy="15" r="15" fill="#0c7bd4" />
            <path d="M1 11C3 4 9 0 15 0c9 0 15 7 15 13 0 5-4 7.500-7.500 7.500-3 0-4.500-1-4.500-2s1.500-1.500 1.500-4C19.500 11 16 8 11 8 6 8 2 11 1 11z" fill="url(#e1)" />
            <path d="M9 18c0-5 4-7 7-6.500-3 1-4 3.500-3.500 6 1 4 5 6.500 9.500 6.500 2.500 0 4.500-1 5.500-1.500C25 28 20 30 17 30 12 29 9 23 9 18z" fill="#134fa0" />
            <path d="M16 12q3.500.500 3.500 3 0 2-1.500 3 0 3 5 2.700 4-.200 6.500-3.700 0 3.500-1.800 5.500-3 2-6 1.500-5.500-.5-8-4-1.800-3.500-.2-6 1-1.700 2.500-2z" fill="#152b36" />
          </svg>
        </TaskItem>
        <TaskItem>
          <svg viewBox="0 0 30 27" className="mt-px h-[27px] w-[30px]"><path d="M0 2q0-2 2-2h8l3 3.500V9H0z" fill="#e0a010" /><path d="M0 9q0-1 1-1l10-.500L13 3.500h15q2 0 2 2V26H0z" fill="#ffcf48" /><path d="M5 26v-4q0-3 3-3h14q3 0 3 3v4z" fill="#1173cf" /><path d="M9 22.500h12" stroke="#0a4a94" /></svg>
        </TaskItem>
        <TaskItem>
          <svg viewBox="0 0 29 29" className="h-[29px] w-[29px]"><path d="M7.500 5V1h14v4" fill="none" stroke="#37b5e8" strokeWidth="2" /><path d="M0 5q0-.800 1-.800h27q1 0 1 .800v20q0 4-4 4H4q-4 0-4-4z" fill="#f2f2f2" /><path d="M9 11h5v5H9z" fill="#f25022" /><path d="M15 11h5v5h-5z" fill="#7fba00" /><path d="M9 17h5v5H9z" fill="#00a4ef" /><path d="M15 17h5v5h-5z" fill="#ffb900" /></svg>
        </TaskItem>
        <TaskItem>
          <svg viewBox="0 0 30 28" className="h-[28px] w-[30px]"><path d="M0 9L15 0l15 9v5H0z" fill="#0b59a5" /><path d="M3 9h24v10H3z" fill="#f2f2f2" /><path d="M0 9l15 9-6 10H0z" fill="#2aa6e6" /><path d="M30 9v19H0l12-10z" fill="#2295dc" /><path d="M30 9v19L15 18z" fill="#4cc6f1" /><path d="M0 28l15-10 15 10z" fill="#1d8fdb" /></svg>
        </TaskItem>
        <TaskItem running>
          <svg viewBox="-15 -15 30 30" className="h-[30px] w-[30px]">
            <circle r="11.500" fill="#858b91" />
            {[0, 60, 120, 180, 240, 300].map((a) => <path key={a} transform={`rotate(${a})`} d="M9 -5.500l4.500 1.500q1.500 0 1.500 4t-1.500 4L9 5.500z" fill={a < 180 && a > 0 ? "#747a80" : "#90969b"} />)}
            <circle r="7.200" fill="#e9eef2" /><circle r="5.300" fill="#1464b8" />
          </svg>
        </TaskItem>
        <TaskItem running><Office letter="P" c1="#d9531c" c2="#d8622c" bg="#f39a6c" /></TaskItem>
        <TaskItem running>
          <svg viewBox="0 0 30 30" className="h-[30px] w-[30px]"><path d="M0 30l2-8A15 14.500 0 1 1 8 28z" fill="#fff" /><path d="M3 27l1.500-5.500A12.300 12 0 1 1 8.500 25.500z" fill="#40c351" /><path d="M9.500 8.500q1.500-1.500 2.500 0l1.500 3q0 1-1.300 2.200 1.500 3 4.800 4.500l1.800-2q.700-.500 3.700 1.200.500.500 0 2-1.500 2.500-4.500 2-7-1.500-10-8.500-.500-2.500 1.500-4.400z" fill="#fff" /></svg>
        </TaskItem>
        <div className="mt-[4px] ml-[5px] flex h-[50px] w-[50px] rounded-[5px] border border-l-0 border-white/5 bg-white/5">
          <div className="-mt-px -ml-px flex h-[50px] w-[45px] flex-col items-center rounded-[5px] border border-white/5 bg-white/5 pt-[9px]">
            <Office letter="W" c1="#1456b0" c2="#4678bd" bg="#9fc0ec" /><Dot on />
          </div>
        </div>
      </div>
      <div className="ml-auto flex items-start pt-[9px] pr-[24px]">
        <svg viewBox="0 0 17 10" className="mt-[15px] -mr-px h-[10px] w-[17px]"><path d="M.8 9L8.500 1.500 16.200 9" fill="none" stroke="#fff" strokeWidth="1.300" /></svg>
        <svg viewBox="0 0 21 21" className="mt-[10px] ml-[17px] h-[21px] w-[21px]" fill="none" stroke="#fff" strokeWidth="1.500"><path d="M19.200 9A9.200 9.200 0 1 0 9.500 19.300M1.500 7h17M1.500 13.500h8M10 1Q3 10 9.500 19M10 1q4 4 4 7.500" /><circle cx="15.200" cy="15" r="4.800" /><path d="M12 18.300l6.500-6.500" /></svg>
        <svg viewBox="0 0 21 19" className="mt-[11px] ml-[9px] h-[19px] w-[21px]" fill="none" stroke="#fff" strokeWidth="1.400"><path d="M1 6.500h3.500L9 2v14.500l-4.500-4H1z" /><path d="M12 6.500q1.500 3 0 6M14.500 4q3.500 5.500 0 11M17 1.500q5 8 0 16" /></svg>
        <svg viewBox="0 0 21 13" className="mt-[14px] ml-[9px] h-[13px] w-[21px]"><rect x=".8" y=".8" width="16.500" height="11.400" rx="2.500" fill="none" stroke="#fff" strokeWidth="1.500" /><rect x="3" y="3" width="10" height="7" rx="1" fill="#fff" /><path d="M18 4.500q2.500 0 2.500 2t-2.500 2z" fill="#fff" /></svg>
        <div className="-mr-px ml-[21px] flex flex-col items-end">
          <Fit w={54} className="text-[14.500px] leading-5">7:44 PM</Fit>
          <Fit w={61} className="text-[14.500px] leading-5">2/4/2023</Fit>
        </div>
        <div className="mt-[10px] ml-[11px] flex h-5 w-5 items-center justify-center rounded-full bg-[#4cc2ff] text-[12px] leading-5 text-[#0b2430]">1</div>
      </div>
    </div>
  );
}

export default function App() {
  return (
    <div className="flex h-[1080px] w-[1920px] flex-col overflow-hidden bg-[#142b37] font-['Open_Sans','Noto_Sans',sans-serif]">
      <TitleBar />
      <Tabs />
      <Ribbon />
      <QuickAccess />
      <Workspace />
      <StatusBar />
      <Taskbar />
    </div>
  );
}
